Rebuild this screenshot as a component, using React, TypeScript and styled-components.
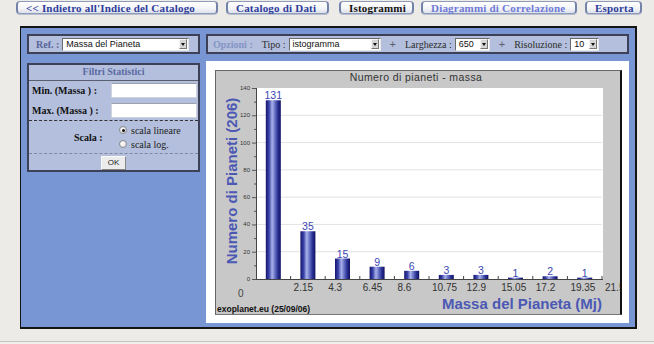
import React from 'react';
import styled, { createGlobalStyle } from 'styled-components';

const GlobalStyle = createGlobalStyle`
  html, body {
    margin: 0;
    padding: 0;
    background: #edebe7;
    font-family: "Liberation Serif", serif;
  }
`;

const Page = styled.div`
  width: 654px;
  height: 344px;
  display: flex;
  flex-direction: column;
  border-bottom: 0;
  position: relative;
`;

const NavBar = styled.div`
  display: flex;
  align-items: flex-start;
  padding: 1px 0 0 16px;
  height: 13px;
`;

const NavButton = styled.div<{ $w: number; $gap: number; $tone: 'link' | 'visited' | 'current' }>`
  box-sizing: border-box;
  width: ${({ $w }) => $w}px;
  margin-right: ${({ $gap }) => $gap}px;
  height: 13px;
  border: 1px solid #8d9ab8;
  border-left: 2px solid #7282a8;
  border-right: 2px solid #7282a8;
  border-radius: 4px;
  background: linear-gradient(#ffffff, #f3f4f8 60%, #dde1ea);
  box-shadow: 0 1px 0 #b8bfd0;
  display: flex;
  align-items: center;
  padding-left: 8px;
  font-family: "Liberation Serif", serif;
  font-weight: bold;
  font-size: 11px;
  letter-spacing: 0.2px;
  white-space: nowrap;
  color: ${({ $tone }) => ($tone === 'current' ? '#111111' : $tone === 'visited' ? '#6f79d6' : '#2e3c9a')};
`;

const Panel = styled.div`
  box-sizing: border-box;
  margin: 12px 0 0 20px;
  width: 617px;
  height: 303px;
  border: 2px solid #141414;
  border-left-width: 1px;
  background: #7896d3;
  padding: 6px 5px 5px 6px;
  display: grid;
  grid-template-columns: 173px 423px;
  grid-template-rows: 20px 1fr;
  column-gap: 6px;
  row-gap: 7px;
`;

const Bar = styled.div<{ $pad?: number }>`
  box-sizing: border-box;
  background: #b3bfdc;
  border: 2px solid #3c4158;
  display: flex;
  align-items: center;
  padding-left: ${({ $pad }) => $pad ?? 7}px;
  font-size: 10px;
  white-space: nowrap;
`;

const BarLabel = styled.span<{ $tone: 'ref' | 'opt' | 'plain' }>`
  font-family: "Liberation Serif", serif;
  font-weight: ${({ $tone }) => ($tone === 'plain' ? 'normal' : 'bold')};
  font-size: 10px;
  color: ${({ $tone }) => ($tone === 'ref' ? '#56659a' : $tone === 'opt' ? '#8593c6' : '#2c2c2c')};
  margin-right: ${({ $tone }) => ($tone === 'opt' ? 9 : 3)}px;
`;

const Plus = styled.span`
  color: #5a5f70;
  font-family: "Liberation Sans", sans-serif;
  font-size: 11px;
  margin: 0 9px 0 9px;
`;

const SelectBox = styled.div<{ $w: number }>`
  box-sizing: border-box;
  width: ${({ $w }) => $w}px;
  height: 13px;
  background: #ffffff;
  border-top: 1px solid #6a6a6a;
  border-left: 1px solid #6a6a6a;
  border-right: 1px solid #e8e8e8;
  border-bottom: 1px solid #e8e8e8;
  display: flex;
  align-items: center;
  justify-content: space-between;
  padding-left: 3px;
  font-family: "Liberation Sans", sans-serif;
  font-size: 9px;
  color: #111;
`;

const SelectArrow = styled.span`
  box-sizing: border-box;
  width: 8px;
  height: 10px;
  margin-right: 1px;
  background: #d6d6d6;
  border: 1px solid;
  border-color: #f4f4f4 #777 #777 #f4f4f4;
  display: flex;
  align-items: center;
  justify-content: center;
  &::after {
    content: '';
    border-left: 2px solid transparent;
    border-right: 2px solid transparent;
    border-top: 3px solid #111;
  }
`;

const FilterBox = styled.div`
  box-sizing: border-box;
  margin-top: 2px;
  height: 109px;
  background: #b3bfdc;
  border: 2px solid #3c4158;
  display: flex;
  flex-direction: column;
`;

const FilterTitle = styled.div`
  height: 15px;
  border-bottom: 1px solid #5a5f70;
  text-align: center;
  font-family: "Liberation Serif", serif;
  font-weight: bold;
  font-size: 10px;
  line-height: 14px;
  color: #5b6aa2;
`;

const FieldRow = styled.div`
  display: flex;
  align-items: center;
  height: 20px;
  padding-left: 3px;
`;

const FieldLabel = styled.span`
  width: 79px;
  font-family: "Liberation Serif", serif;
  font-weight: bold;
  font-size: 10px;
  color: #111;
`;

const TextInput = styled.div`
  box-sizing: border-box;
  width: 86px;
  height: 15px;
  background: #fff;
  border: 1px solid #cfd3dc;
  border-top-color: #9aa0b0;
`;

const ScalaSection = styled.div`
  border-top: 1px dashed #333;
  border-bottom: 1px dashed #8088a0;
  height: 32px;
  display: flex;
  align-items: center;
  padding-left: 45px;
`;

const ScalaLabel = styled.span`
  font-family: "Liberation Serif", serif;
  font-weight: bold;
  font-size: 10px;
  color: #111;
  width: 45px;
`;

const RadioList = styled.div`
  display: flex;
  flex-direction: column;
  gap: 3px;
`;

const RadioItem = styled.div`
  display: flex;
  align-items: center;
  gap: 4px;
  font-family: "Liberation Serif", serif;
  font-size: 10px;
  color: #222;
  height: 11px;
`;

const RadioDot = styled.span<{ $on?: boolean }>`
  box-sizing: border-box;
  width: 8px;
  height: 8px;
  border-radius: 50%;
  border: 1px solid #8a8a8a;
  background: radial-gradient(circle at 40% 40%, #fff, #d8d8d8);
  display: flex;
  align-items: center;
  justify-content: center;
  &::after {
    content: '';
    width: 3px;
    height: 3px;
    border-radius: 50%;
    background: ${({ $on }) => ($on ? '#111' : 'transparent')};
  }
`;

const ButtonRow = styled.div`
  display: flex;
  justify-content: center;
  padding-top: 2px;
`;

const OkButton = styled.div`
  box-sizing: border-box;
  width: 25px;
  height: 14px;
  background: #ececec;
  border: 1px solid;
  border-color: #fafafa #888 #888 #fafafa;
  font-family: "Liberation Sans", sans-serif;
  font-size: 8px;
  line-height: 12px;
  text-align: center;
  color: #222;
`;

const ChartBox = styled.div`
  background: #fff;
  padding: 9px 8px 8px 9px;
  display: flex;
`;

const ChartFrame = styled.div`
  flex: 1;
  background: #c8c8c8;
  border-left: 1px solid #666;
  border-top: 1px solid #666;
  border-right: 2px solid #111;
  border-bottom: 1px solid #777;
  display: flex;
`;

const BottomRule = styled.div`
  position: absolute;
  left: 0;
  right: 0;
  top: 341px;
  height: 3px;
  border-top: 1px solid #c6c4c0;
  background: #f1f0ed;
`;

const values = [131, 35, 15, 9, 6, 3, 3, 1, 2, 1];
const xLabels = ['2.15', '4.3', '6.45', '8.6', '10.75', '12.9', '15.05', '17.2', '19.35', '21.5'];

const X0 = 40;
const X1 = 386;
const YT = 17;
const YB = 208;
const cat = (X1 - X0) / values.length;
const yOf = (v: number) => YB - (v * (YB - YT)) / 140;

const Histogram: React.FC = () => (
  <svg width={404} height={243} viewBox="0 0 404 243">
    <defs>
      <linearGradient id="barFill" x1="0" x2="1" y1="0" y2="0">
        <stop offset="0" stopColor="#14146e" />
        <stop offset="0.22" stopColor="#3a44a8" />
        <stop offset="0.42" stopColor="#aab2ea" />
        <stop offset="0.55" stopColor="#7c86d2" />
        <stop offset="0.8" stopColor="#2a3296" />
        <stop offset="1" stopColor="#10105e" />
      </linearGradient>
    </defs>
    <text x={200} y={10} textAnchor="middle" fontFamily="Liberation Sans, sans-serif" fontSize={10.5} letterSpacing={0.4} fill="#333">
      Numero di pianeti - massa
    </text>
    <rect x={X0} y={YT} width={X1 - X0 + 1} height={YB - YT} fill="#ffffff" />
    {[20, 40, 60, 80, 100, 120].map(v => (
      <line key={v} x1={X0} x2={X1} y1={yOf(v)} y2={yOf(v)} stroke="#e2e2e2" strokeWidth={1} />
    ))}
    {Array.from({ length: 15 }, (_, i) => i * 10).map(v => (
      <line key={v} x1={v % 20 === 0 ? X0 - 4 : X0 - 2} x2={X0} y1={yOf(v) + 0.5} y2={yOf(v) + 0.5} stroke="#555" strokeWidth={1} />
    ))}
    {[0, 20, 40, 60, 80, 100, 120, 140].map(v => (
      <text key={v} x={34} y={yOf(v) + 2} textAnchor="end" fontFamily="Liberation Sans, sans-serif" fontSize={6} fill="#333">
        {v}
      </text>
    ))}
    <line x1={X0 + 0.5} x2={X0 + 0.5} y1={YT} y2={YB} stroke="#444" />
    <line x1={X0} x2={X1 + 1} y1={YB + 0.5} y2={YB + 0.5} stroke="#444" />
    {values.map((v, i) => {
      const cx = X0 + cat * (i + 0.5);
      const top = yOf(v);
      return (
        <g key={i}>
          <rect x={cx - 7.5} y={top} width={15} height={Math.max(YB - top, 1.5)} fill="url(#barFill)" />
          <text x={cx} y={top - 1} textAnchor="middle" fontFamily="Liberation Sans, sans-serif" fontSize={10.5} fill="#3a48b2">
            {v}
          </text>
        </g>
      );
    })}
    {xLabels.map((l, i) => {
      const tx = X0 + cat * (i + 1);
      return (
        <g key={l}>
          <line x1={tx} x2={tx} y1={YB - 3} y2={YB + 1} stroke="#444" />
          <text x={tx + 3} y={220} fontFamily="Liberation Sans, sans-serif" fontSize={10} fill="#333">
            {l}
          </text>
        </g>
      );
    })}
    <text x={22} y={226} fontFamily="Liberation Sans, sans-serif" fontSize={10} fill="#444">
      0
    </text>
    <text
      transform="translate(21 110) rotate(-90)"
      textAnchor="middle"
      fontFamily="Liberation Sans, sans-serif"
      fontWeight="bold"
      fontSize={15}
      fill="#4b58b4"
    >
      Numero di Pianeti (206)
    </text>
    <text x={386} y={238} textAnchor="end" fontFamily="Liberation Sans, sans-serif" fontWeight="bold" fontSize={15} fill="#4b58b4">
      Massa del Pianeta (Mj)
    </text>
    <text x={1} y={241} fontFamily="Liberation Sans, sans-serif" fontWeight="bold" fontSize={8.5} fill="#111">
      exoplanet.eu (25/09/06)
    </text>
  </svg>
);

const App: React.FC = () => (
  <Page>
    <GlobalStyle />
    <NavBar>
      <NavButton $w={202} $gap={8} $tone="link">&lt;&lt; Indietro all'Indice del Catalogo</NavButton>
      <NavButton $w={103} $gap={10} $tone="link">Catalogo di Dati</NavButton>
      <NavButton $w={75} $gap={7} $tone="current">Istogrammi</NavButton>
      <NavButton $w={156} $gap={8} $tone="visited">Diagrammi di Correlazione</NavButton>
      <NavButton $w={57} $gap={0} $tone="link">Esporta</NavButton>
    </NavBar>
    <Panel>
      <Bar $pad={7}>
        <BarLabel $tone="ref">Ref. :</BarLabel>
        <SelectBox $w={127}>
          Massa del Pianeta
          <SelectArrow />
        </SelectBox>
      </Bar>
      <Bar $pad={5}>
        <BarLabel $tone="opt">Opzioni :</BarLabel>
        <BarLabel $tone="plain">Tipo :</BarLabel>
        <SelectBox $w={92}>
          istogramma
          <SelectArrow />
        </SelectBox>
        <Plus>+</Plus>
        <BarLabel $tone="plain">Larghezza :</BarLabel>
        <SelectBox $w={35}>
          650
          <SelectArrow />
        </SelectBox>
        <Plus>+</Plus>
        <BarLabel $tone="plain">Risoluzione :</BarLabel>
        <SelectBox $w={29}>
          10
          <SelectArrow />
        </SelectBox>
      </Bar>
      <div>
        <FilterBox>
          <FilterTitle>Filtri Statistici</FilterTitle>
          <FieldRow>
            <FieldLabel>Min. (Massa ) :</FieldLabel>
            <TextInput />
          </FieldRow>
          <FieldRow>
            <FieldLabel>Max. (Massa ) :</FieldLabel>
            <TextInput />
          </FieldRow>
          <ScalaSection>
            <ScalaLabel>Scala :</ScalaLabel>
            <RadioList>
              <RadioItem>
                <RadioDot $on />
                scala lineare
              </RadioItem>
              <RadioItem>
                <RadioDot />
                scala log.
              </RadioItem>
            </RadioList>
          </ScalaSection>
          <ButtonRow>
            <OkButton>OK</OkButton>
          </ButtonRow>
        </FilterBox>
      </div>
      <ChartBox>
        <ChartFrame>
          <Histogram />
        </ChartFrame>
      </ChartBox>
    </Panel>
    <BottomRule />
  </Page>
);

export default App;
